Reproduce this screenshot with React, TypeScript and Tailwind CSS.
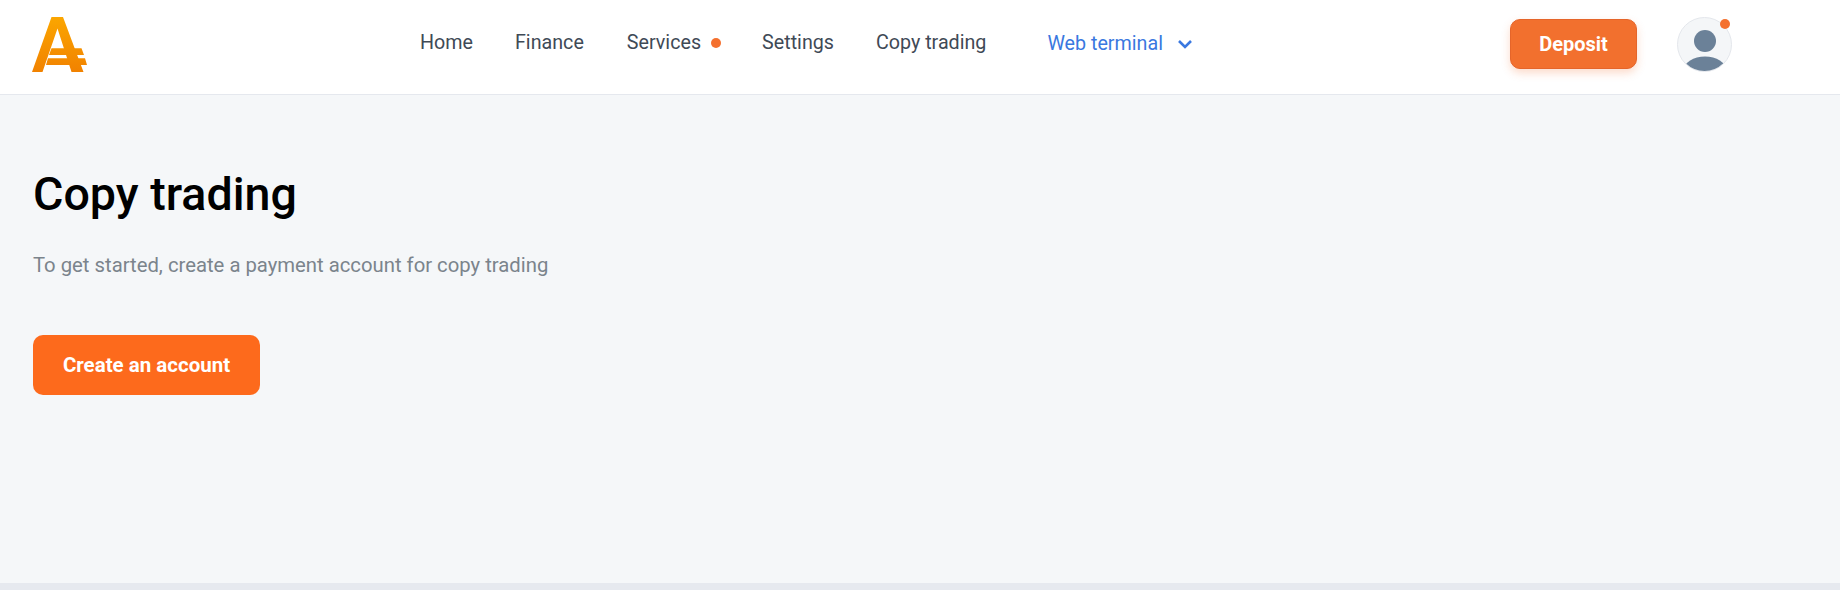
const Logo = () => (
  <svg width="56" height="56" viewBox="0 0 56 56" className="shrink-0">
    <defs>
      <linearGradient id="logoFill" x1="0" y1="0" x2="0" y2="56" gradientUnits="userSpaceOnUse">
        <stop offset="0" stopColor="#fba600" />
        <stop offset="1" stopColor="#f18100" />
      </linearGradient>
    </defs>
    <path fill="url(#logoFill)" d="M19.5 0H31L51.5 55H39.5L25.5 11.5L10.5 55H0Z" />
    <path fill="url(#logoFill)" d="M19.5 31.3H49.5L52 38H17ZM16 41.3H53L55 48H14Z" />
  </svg>
);

const Avatar = () => (
  <div className="relative ml-10 h-[55px] w-[55px] shrink-0">
    <div className="h-full w-full overflow-hidden rounded-full border border-[#e4e7ec] bg-[#f4f6f8]">
      <svg width="53" height="53" viewBox="0 0 53 53">
        <circle cx="27" cy="23" r="11" fill="#6b8198" />
        <ellipse cx="27" cy="52" rx="21" ry="13.5" fill="#6b8198" />
      </svg>
    </div>
    <span className="absolute right-[2px] top-[2px] h-[10px] w-[10px] rounded-full bg-[#f4702e]" />
  </div>
);

export default function App() {
  return (
    <div className="flex h-[590px] flex-col bg-[#f5f7f9] font-['Roboto',sans-serif]">
      <header className="flex h-[95px] shrink-0 items-center border-b border-[#e5e8ee] bg-white pb-[5px] pl-8">
        <Logo />
        <nav className="ml-[332px] flex w-[1090px] shrink-0 items-center pb-[3px] text-[19.7px] text-[#3f4a56]">
          <a className="mr-[42px]">Home</a>
          <a className="mr-[43px]">Finance</a>
          <a className="flex items-center">
            Services
            <span className="ml-[10px] h-[10px] w-[10px] rounded-full bg-[#f4702e]" />
          </a>
          <a className="ml-[41px] mr-[42px]">Settings</a>
          <a>Copy trading</a>
          <a className="ml-[61px] flex translate-y-[1px] items-center text-[#3a78e0]">
            Web terminal
            <svg width="16" height="10" viewBox="0 0 16 10" className="ml-[14px]">
              <path d="M2 2l6 6 6-6" fill="none" stroke="#3a78e0" strokeWidth="2.6" />
            </svg>
          </a>
        </nav>
        <button className="mb-[2px] h-[50px] w-[127px] rounded-[10px] border border-[#e5652a] bg-[#f2702e] text-[20px] font-bold text-white shadow-[0_4px_8px_rgba(244,112,46,0.25)]">
          Deposit
        </button>
        <Avatar />
      </header>
      <main className="flex-1 px-[33px] pt-[73px]">
        <h1 className="text-[46.6px] font-medium leading-[52px] text-black">Copy trading</h1>
        <p className="mt-[33px] text-[20.3px] leading-[24px] text-[#7b848c]">
          To get started, create a payment account for copy trading
        </p>
        <button className="mt-[58px] h-[60px] w-[227px] rounded-[10px] bg-[#fd6a1c] text-[20.5px] font-bold text-white">
          Create an account
        </button>
      </main>
      <div className="h-[7px] shrink-0 bg-[#e6e9ef]" />
    </div>
  );
}
